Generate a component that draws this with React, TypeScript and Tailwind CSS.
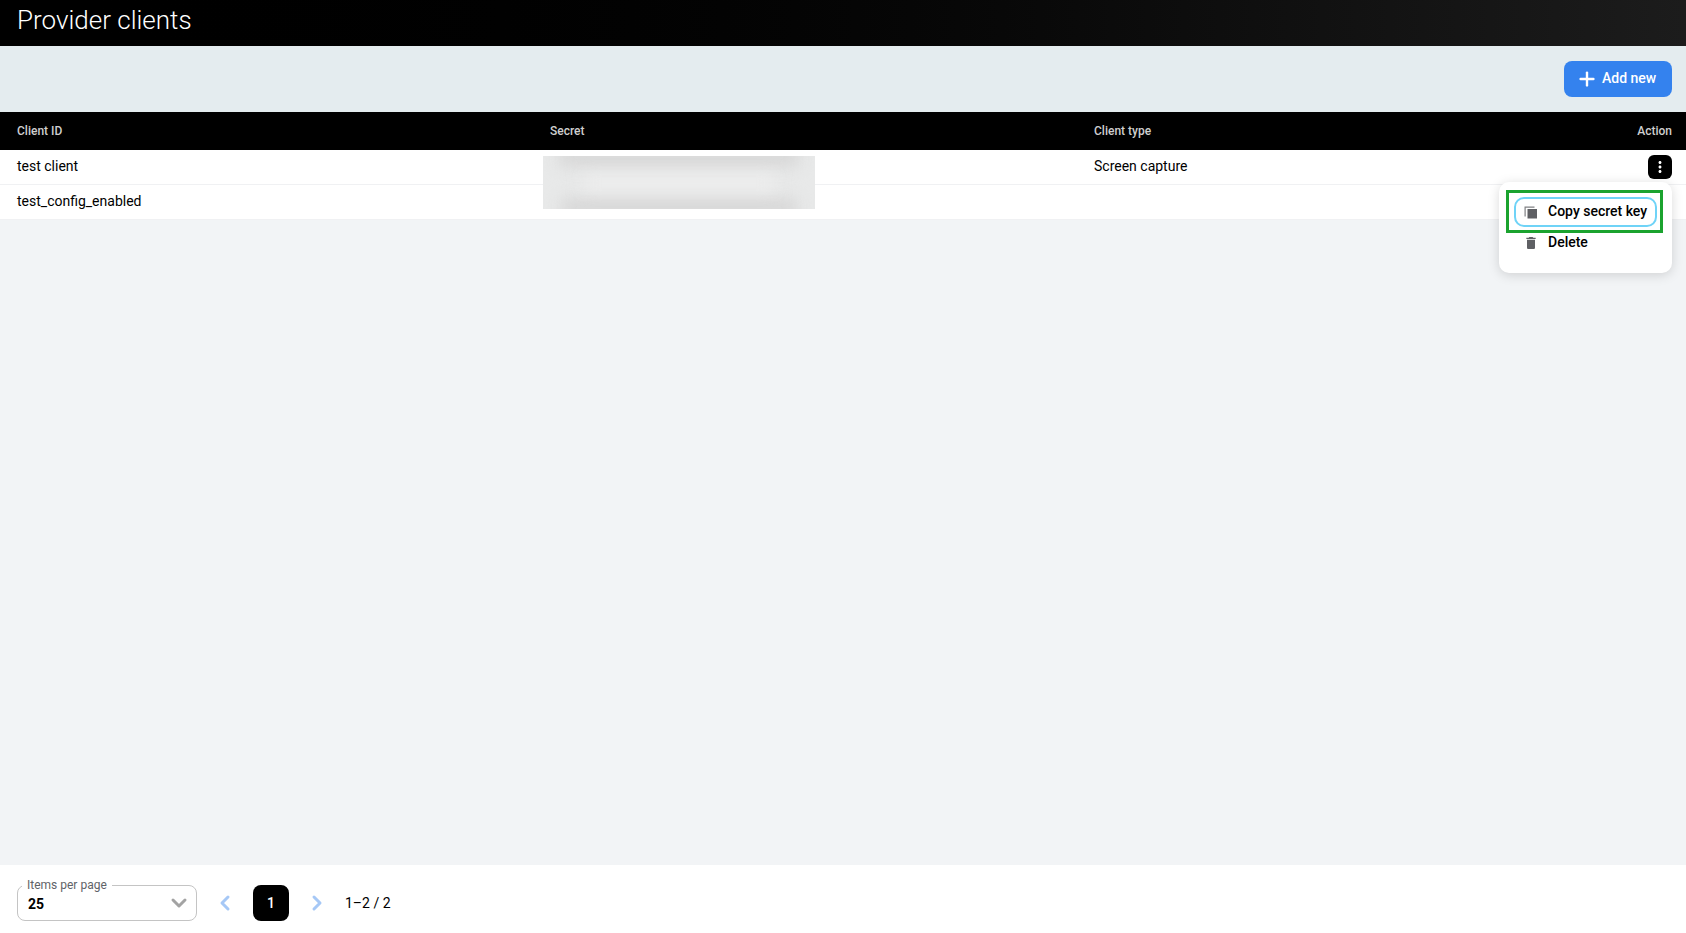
import { ChevronDown, ChevronLeft, ChevronRight, Plus } from 'lucide-react';

const rows = [
  { id: 'test client', type: 'Screen capture' },
  { id: 'test_config_enabled', type: '' },
];

function CopyIcon() {
  return (
    <svg viewBox="0 0 16 16" className="h-4 w-4 text-[#5f6064]" fill="currentColor">
      <path d="M1.5 2.5h10v1.2H2.7v8.8H1.5z" opacity="0.8" />
      <path d="M4.5 5h9.5v9.5H4.5z" />
    </svg>
  );
}

function TrashIcon() {
  return (
    <svg viewBox="0 0 24 24" className="h-4 w-4 text-[#5f6064]" fill="currentColor">
      <path d="M6 19c0 1.1.9 2 2 2h8c1.1 0 2-.9 2-2V7H6v12zM19 4h-3.5l-1-1h-5l-1 1H5v2h14V4z" />
    </svg>
  );
}

function MoreIcon() {
  return (
    <svg viewBox="0 0 24 24" className="h-[18px] w-[18px] text-white" fill="currentColor">
      <path d="M12 8c1.1 0 2-.9 2-2s-.9-2-2-2-2 .9-2 2 .9 2 2 2zm0 2c-1.1 0-2 .9-2 2s.9 2 2 2 2-.9 2-2-.9-2-2-2zm0 6c-1.1 0-2 .9-2 2s.9 2 2 2 2-.9 2-2-.9-2-2-2z" />
    </svg>
  );
}

export default function App() {
  return (
    <div className="relative flex h-[933px] w-full flex-col overflow-hidden bg-[#f2f4f6] font-['Roboto',sans-serif] text-black">
      {/* Title bar */}
      <header className="flex h-[46px] shrink-0 items-center bg-gradient-to-r from-black to-[#1c1c1c] px-[17px] pb-[6px]">
        <h1 className="text-[26px] font-light leading-8 text-white">Provider clients</h1>
      </header>

      {/* Toolbar */}
      <div className="flex h-[66px] shrink-0 items-center justify-end bg-[#e4ecef] px-[14px]">
        <button className="flex h-9 w-[108px] items-center gap-[4px] rounded-lg bg-[#3482ee] pl-[12px] text-sm font-medium text-white">
          <Plus className="h-[22px] w-[22px]" strokeWidth={2.6} />
          <span className="pb-[2px]">Add new</span>
        </button>
      </div>

      {/* Table */}
      <div className="grid h-[38px] shrink-0 grid-cols-[533px_544px_1fr_auto] items-center bg-black pl-[17px] pr-[14px] text-xs font-medium text-[#cfcfcf]">
        <div>Client ID</div>
        <div>Secret</div>
        <div>Client type</div>
        <div>Action</div>
      </div>
      {rows.map((row, i) => (
        <div
          key={row.id}
          className="grid h-[35px] shrink-0 grid-cols-[533px_544px_1fr_auto] items-center border-b border-[#f0f1f3] bg-white pl-[17px] pr-[14px] text-sm"
        >
          <div className="pb-[2px]">{row.id}</div>
          <div />
          <div className="pb-[2px]">{row.type}</div>
          <div className="flex justify-end">
            {i === 0 && (
              <button className="flex h-6 w-6 items-center justify-center rounded-md bg-black">
                <MoreIcon />
              </button>
            )}
          </div>
        </div>
      ))}

      <div className="flex-1" />

      {/* Pagination */}
      <footer className="flex h-[68px] shrink-0 items-center bg-white pl-[17px] pt-[8px]">
        <div className="relative flex h-9 w-[180px] items-center justify-between rounded-lg border border-[#c4c4c4] pl-[10px] pr-[5px]">
          <span className="absolute -top-[8px] left-[4px] bg-white px-[5px] text-xs leading-[14px] text-[#5f6368]">
            Items per page
          </span>
          <span className="pt-[2px] text-sm font-bold">25</span>
          <ChevronDown className="h-6 w-6 text-[#a3a3a3]" strokeWidth={3} />
        </div>
        <ChevronLeft className="ml-4 h-6 w-6 text-[#a6c8f6]" strokeWidth={3} />
        <div className="ml-4 flex h-9 w-9 items-center justify-center rounded-lg bg-black text-sm font-medium text-white">
          1
        </div>
        <ChevronRight className="ml-4 h-6 w-6 text-[#a6c8f6]" strokeWidth={3} />
        <span className="ml-4 text-sm">1–2 / 2</span>
      </footer>

      {/* Blurred-out secrets */}
      <div className="absolute left-[543px] top-[156px] h-[53px] w-[272px] overflow-hidden bg-[#e8e9e9]">
        <div className="absolute inset-x-[16px] top-[-8px] h-[18px] bg-[#d6d6d6] blur-[8px]" />
        <div className="absolute inset-x-[18px] bottom-[-8px] h-[18px] bg-[#d6d6d6] blur-[8px]" />
        <div className="absolute inset-x-[40px] top-[20px] h-[14px] bg-[#eeeeee] blur-[8px]" />
      </div>

      {/* Row action menu */}
      <div className="absolute left-[1499px] top-[182px] h-[91px] w-[173px] rounded-[10px] bg-white px-[15px] pt-[15px] shadow-[0_2px_12px_rgba(0,0,0,0.15)]">
        <div className="flex h-[30px] w-[143px] items-center gap-[9px] rounded-[10px] border-2 border-[#6fd3f7] pl-[7px] text-sm font-medium">
          <CopyIcon />
          <span className="pb-[2px]">Copy secret key</span>
        </div>
        <div className="flex h-[30px] items-center gap-[9px] pl-[9px] pt-[2px] text-sm font-medium">
          <TrashIcon />
          <span className="pb-[2px]">Delete</span>
        </div>
      </div>

      {/* Annotation frame */}
      <div className="absolute left-[1506px] top-[190px] h-[43px] w-[157px] border-[3px] border-[#1ba32f]" />
    </div>
  );
}
